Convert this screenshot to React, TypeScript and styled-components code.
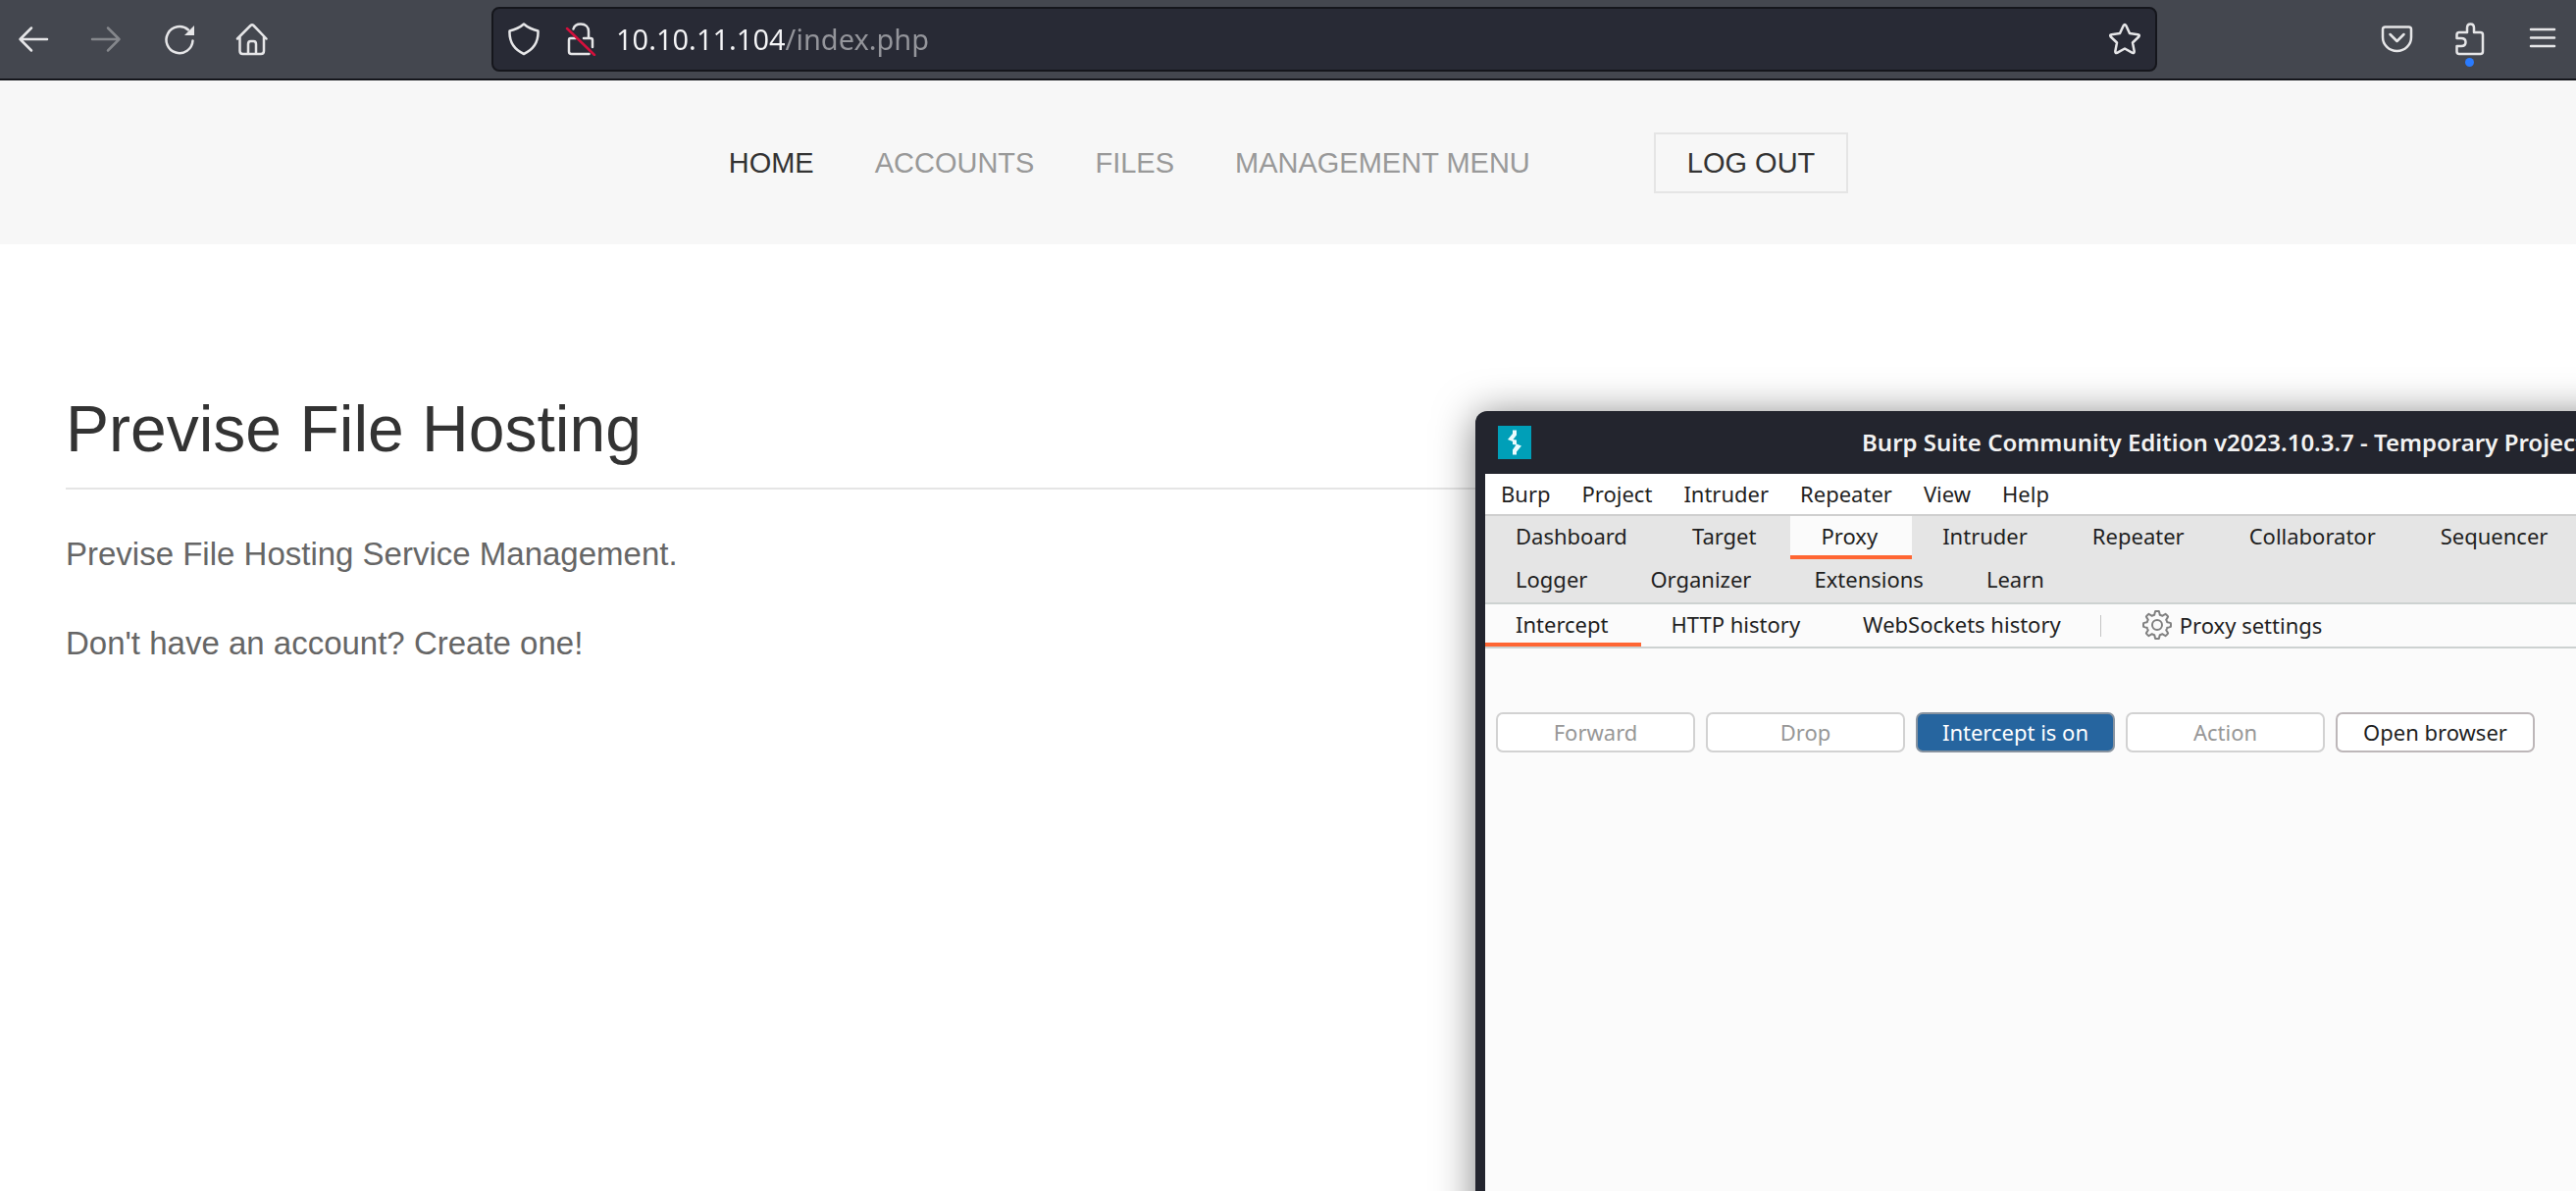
import React from "react";
import styled, { createGlobalStyle } from "styled-components";

const GlobalStyle = createGlobalStyle`
  *, *::before, *::after { box-sizing: border-box; }
  html, body, #root { height: 100%; }
  body { margin: 0; background: #ffffff; }
  h1, p, ul { margin: 0; padding: 0; }
  button, input { font: inherit; color: inherit; }
`;

const sans = `"Liberation Sans", Arial, sans-serif`;
const uiFont = `"Noto Sans", "Open Sans", sans-serif`;

const Desktop = styled.div`
  position: relative;
  display: flex;
  flex-direction: column;
  min-height: 100%;
  overflow: hidden;
`;

/* ---------- browser toolbar ---------- */

const Toolbar = styled.div`
  display: flex;
  align-items: center;
  height: 82px;
  padding: 0 17px;
  background: #44474f;
  border-bottom: 2px solid #15161c;
`;

const ToolGroup = styled.div`
  display: flex;
  align-items: center;
  gap: 40px;
`;

const ToolButton = styled.button<{ $dim?: boolean }>`
  position: relative;
  display: flex;
  padding: 0;
  border: 0;
  background: none;
  color: ${(p) => (p.$dim ? "#85878c" : "#e6e6e8")};
`;

const Badge = styled.span`
  position: absolute;
  left: 50%;
  top: 36px;
  width: 9px;
  height: 9px;
  margin-left: -5px;
  border-radius: 50%;
  background: #2a7bff;
`;

const UrlBar = styled.form`
  display: flex;
  flex: 1;
  align-items: center;
  height: 66px;
  margin: 0 228px;
  padding: 0 14px;
  border: 2px solid #15161c;
  border-radius: 8px;
  background: #282a35;
`;

const UrlIcons = styled.div`
  display: flex;
  gap: 24px;
  margin-right: 19px;
`;

const UrlInput = styled.input`
  flex: 1;
  min-width: 0;
  height: 48px;
  padding: 0;
  border: 0;
  outline: 0;
  font: 29px/48px ${uiFont};
  color: transparent;
  background: linear-gradient(90deg, #f4f4f6 172px, #94959b 172px);
  -webkit-background-clip: text;
  background-clip: text;
`;

/* ---------- web page ---------- */

const SiteHeader = styled.header`
  display: flex;
  align-items: center;
  justify-content: center;
  height: 167px;
  background: #f7f7f7;
  font: 29px/40px ${sans};
`;

const NavList = styled.ul`
  display: flex;
  list-style: none;
`;

const NavLink = styled.a<{ $active?: boolean }>`
  display: block;
  padding: 0 31px;
  color: ${(p) => (p.$active ? "#333333" : "#999999")};
  text-decoration: none;
`;

const LogOut = styled.button`
  height: 62px;
  margin: 0 30px 0 95px;
  padding: 0 32px;
  border: 2px solid #e5e5e5;
  background: transparent;
  color: #333333;
`;

const Main = styled.main`
  padding: 148px 67px;
  font: 33px/50px ${sans};
  color: #666666;
`;

const Title = styled.h1`
  margin-bottom: 41px;
  padding-bottom: 20px;
  border-bottom: 2px solid #e5e5e5;
  font: 66px/80px ${sans};
  color: #333333;
`;

const Paragraph = styled.p`
  margin-bottom: 41px;
`;

/* ---------- floating Burp window ---------- */

const Window = styled.section`
  position: absolute;
  left: 1504px;
  right: -64px;
  top: 419px;
  bottom: -64px;
  display: flex;
  flex-direction: column;
  padding: 0 10px;
  border-radius: 12px;
  background: #23252e;
  box-shadow: 0 4px 40px rgba(0, 0, 0, 0.5);
  font: 22px/30px ${uiFont};
  color: #1f1f1f;
  white-space: nowrap;
`;

const TitleBar = styled.div`
  display: flex;
  align-items: center;
  gap: 337px;
  height: 64px;
  padding-left: 13px;
  font: 600 24px/32px ${uiFont};
  color: #f2f2f2;
`;

const MenuBar = styled.div`
  display: flex;
  align-items: center;
  height: 43px;
  padding-bottom: 2px;
  border-bottom: 2px solid #cfcfcf;
  background: #ffffff;
`;

const MenuItem = styled.button`
  padding: 0 16px;
  border: 0;
  background: none;
`;

const TabRows = styled.div`
  border-bottom: 2px solid #cdd2d1;
  background: #e5e5e5;
`;

const TabRow = styled.div<{ $light?: boolean }>`
  display: flex;
  align-items: center;
  height: ${(p) => (p.$light ? 45 : 44)}px;
  background: ${(p) => (p.$light ? "#fbfbfb" : "transparent")};
  border-bottom: ${(p) => (p.$light ? "2px solid #cdd2d1" : "0")};
`;

const Tab = styled.button<{ $active?: boolean; $compact?: boolean }>`
  align-self: stretch;
  padding: 0 ${(p) => (p.$compact ? 33 : 35)}px 0 31px;
  border: 0;
  border-bottom: 4px solid ${(p) => (p.$active ? "#ff6633" : "transparent")};
  background: ${(p) => (p.$active ? "#fbfbfb" : "transparent")};
`;

const Separator = styled.span`
  width: 1px;
  height: 22px;
  margin: 0 42px 0 7px;
  background: #c4c4c4;
`;

const SettingsButton = styled.button`
  display: flex;
  align-items: center;
  gap: 8px;
  padding: 0 0 2px;
  border: 0;
  background: none;
`;

const Panel = styled.div`
  display: flex;
  flex: 1;
  align-items: flex-start;
  gap: 11px;
  padding: 65px 11px;
  background: #fbfbfb;
`;

const ActionButton = styled.button<{ $on?: boolean }>`
  width: 203px;
  height: 41px;
  padding: 0 0 2px;
  border: 2px solid ${(p) => (p.$on ? "#8793a0" : "#bdb7b9")};
  border-radius: 7px;
  background: ${(p) => (p.$on ? "#26659f" : "#ffffff")};
  color: ${(p) => (p.$on ? "#ffffff" : "#1f1f1f")};
  &:disabled {
    border-color: #d2d2d2;
    color: #979797;
  }
`;

/* ---------- icons ---------- */

function Icon({ children, w = 2.5 }: { children: React.ReactNode; w?: number }) {
  return (
    <svg width="34" height="34" viewBox="0 0 34 34" fill="none" stroke="currentColor"
      strokeWidth={w} strokeLinecap="round" strokeLinejoin="round" aria-hidden="true">
      {children}
    </svg>
  );
}

const Back = () => <Icon><path d="M31 17H3.5M15 5.5 3.5 17 15 28.5" /></Icon>;
const Forward = () => <Icon><path d="M3 17h27.500M19 5.500 30.500 17 19 28.500" /></Icon>;
const Reload = () => (
  <Icon>
    <path d="M31.500 18.500A13.500 13.500 0 1 1 27 7.500" />
    <path d="M33 3v10H23z" fill="currentColor" stroke="none" />
  </Icon>
);
const Home = () => (
  <Icon>
    <path d="M3 16.500 16.500 3q1.500-1.500 3 0l13 13.500M5.500 14.500V29q0 3 3 3h18.500q3 0 3-3V14.500" />
    <path d="M14 31.500V22q0-3 2.500-3h3q2.500 0 2.500 3v9.500" />
  </Icon>
);
const Shield = () => (
  <Icon>
    <path d="M17 1.500C13 5 7 7.500 2.500 8.500 2 19 6 27 17 32 28 27 32 19 31.500 8.500 27 7.500 21 5 17 1.500z" />
  </Icon>
);
const Lock = () => (
  <Icon>
    <path d="M9.500 6.500C10.500 3 13.500 1.500 17 1.500c5 0 8 3 8 7.500v7M12 16H6.500Q5 16 5 18v11.500Q5 32 7.500 32h18M20 16h7q2 0 2 2v7" />
    <path d="M3 6l28 27" stroke="#d4103c" />
  </Icon>
);
const Star = () => (
  <Icon>
    <path d="M15.700 3.100q1.300-2.200 2.600 0l3.700 8 8.500 1.100q2.200.4.800 2.300l-6.300 6 1.700 8.700q.2 2.300-1.900 1.600L17 26.500l-7.800 4.300q-2.100.7-1.900-1.600L9 20.500l-6.300-6q-1.400-1.900.8-2.300l8.500-1.100z" />
  </Icon>
);
const Pocket = () => (
  <Icon>
    <path d="M4.500 4.500h24q2.500 0 2.500 2.500v8A14.500 14 0 0 1 2 15V7q0-2.500 2.500-2.500z" />
    <path d="m9.500 12 7 7 7-7" />
  </Icon>
);
const Puzzle = () => (
  <Icon>
    <path d="M6 32h21.500q2.500 0 2.500-2.500V12.500q0-2.500-2.500-2.500H21V5.500q0-4-3.500-4t-3.500 4V10H6q-2.500 0-2.500 2.500V16H8q4.500 0 4.500 4T8 24H3.500v5.500q0 2.500 2.500 2.500z" />
  </Icon>
);
const Burger = () => <Icon><path d="M5 7h24M5 15.500h24M5 24h24" /></Icon>;

const gearPoints = (() => {
  const pts: string[] = [];
  for (let i = 0; i < 96; i++) {
    const a = (i / 96) * Math.PI * 2;
    const wave = Math.max(-1, Math.min(1, Math.cos(a * 8) * 2));
    const r = 12.300 + wave * 1.700;
    pts.push(`${(15 + r * Math.sin(a)).toFixed(2)},${(15 - r * Math.cos(a)).toFixed(2)}`);
  }
  return pts.join(" ");
})();

const Gear = () => (
  <svg width="30" height="30" viewBox="0 0 30 30" fill="none" stroke="#808080" strokeWidth="2" strokeLinejoin="round" aria-hidden="true">
    <polygon points={gearPoints} />
    <circle cx="15" cy="15" r="5" />
  </svg>
);

const BurpLogo = () => (
  <svg width="34" height="34" viewBox="0 0 34 34" aria-hidden="true">
    <rect width="34" height="34" fill="#009fb8" />
    <path d="M15 4.500h4v5L15.500 14l3.500.5v4l5 2-5 6v3h-4v-5l3.500-5-3.500-.5V16l-5-2 5-6z" fill="#e9fbfd" />
  </svg>
);

const topTabs = ["Dashboard", "Target", "Proxy", "Intruder", "Repeater", "Collaborator", "Sequencer"];
const lowerTabs = ["Logger", "Organizer", "Extensions", "Learn"];
const proxyTabs = ["Intercept", "HTTP history", "WebSockets history"];
const menus = ["Burp", "Project", "Intruder", "Repeater", "View", "Help"];
const navItems = ["HOME", "ACCOUNTS", "FILES", "MANAGEMENT MENU"];

export default function App() {
  return (
    <Desktop>
      <GlobalStyle />
      <Toolbar>
        <ToolGroup>
          <ToolButton aria-label="Back"><Back /></ToolButton>
          <ToolButton aria-label="Forward" $dim><Forward /></ToolButton>
          <ToolButton aria-label="Reload"><Reload /></ToolButton>
          <ToolButton aria-label="Home"><Home /></ToolButton>
        </ToolGroup>
        <UrlBar onSubmit={(e) => e.preventDefault()}>
          <UrlIcons>
            <ToolButton type="button" aria-label="Tracking protection"><Shield /></ToolButton>
            <ToolButton type="button" aria-label="Connection not secure"><Lock /></ToolButton>
          </UrlIcons>
          <UrlInput aria-label="Address" defaultValue="10.10.11.104/index.php" spellCheck={false} />
          <ToolButton type="button" aria-label="Bookmark"><Star /></ToolButton>
        </UrlBar>
        <ToolGroup>
          <ToolButton aria-label="Pocket"><Pocket /></ToolButton>
          <ToolButton aria-label="Extensions"><Puzzle /><Badge /></ToolButton>
          <ToolButton aria-label="Menu"><Burger /></ToolButton>
        </ToolGroup>
      </Toolbar>

      <SiteHeader>
        <nav>
          <NavList>
            {navItems.map((item, i) => (
              <li key={item}><NavLink href="#" $active={i === 0}>{item}</NavLink></li>
            ))}
          </NavList>
        </nav>
        <LogOut>LOG OUT</LogOut>
      </SiteHeader>

      <Main>
        <Title>Previse File Hosting</Title>
        <Paragraph>Previse File Hosting Service Management.</Paragraph>
        <Paragraph>Don't have an account? Create one!</Paragraph>
      </Main>

      <Window aria-label="Burp Suite">
        <TitleBar>
          <BurpLogo />
          <span>Burp Suite Community Edition v2023.10.3.7 - Temporary Project</span>
        </TitleBar>
        <MenuBar>
          {menus.map((m) => <MenuItem key={m}>{m}</MenuItem>)}
        </MenuBar>
        <TabRows>
          <TabRow>
            {topTabs.map((t) => <Tab key={t} $active={t === "Proxy"}>{t}</Tab>)}
          </TabRow>
          <TabRow>
            {lowerTabs.map((t) => <Tab key={t} $compact>{t}</Tab>)}
          </TabRow>
        </TabRows>
        <TabRow $light>
          {proxyTabs.map((t) => <Tab key={t} $compact $active={t === "Intercept"}>{t}</Tab>)}
          <Separator />
          <SettingsButton><Gear />Proxy settings</SettingsButton>
        </TabRow>
        <Panel>
          <ActionButton disabled>Forward</ActionButton>
          <ActionButton disabled>Drop</ActionButton>
          <ActionButton $on>Intercept is on</ActionButton>
          <ActionButton disabled>Action</ActionButton>
          <ActionButton>Open browser</ActionButton>
        </Panel>
      </Window>
    </Desktop>
  );
}
